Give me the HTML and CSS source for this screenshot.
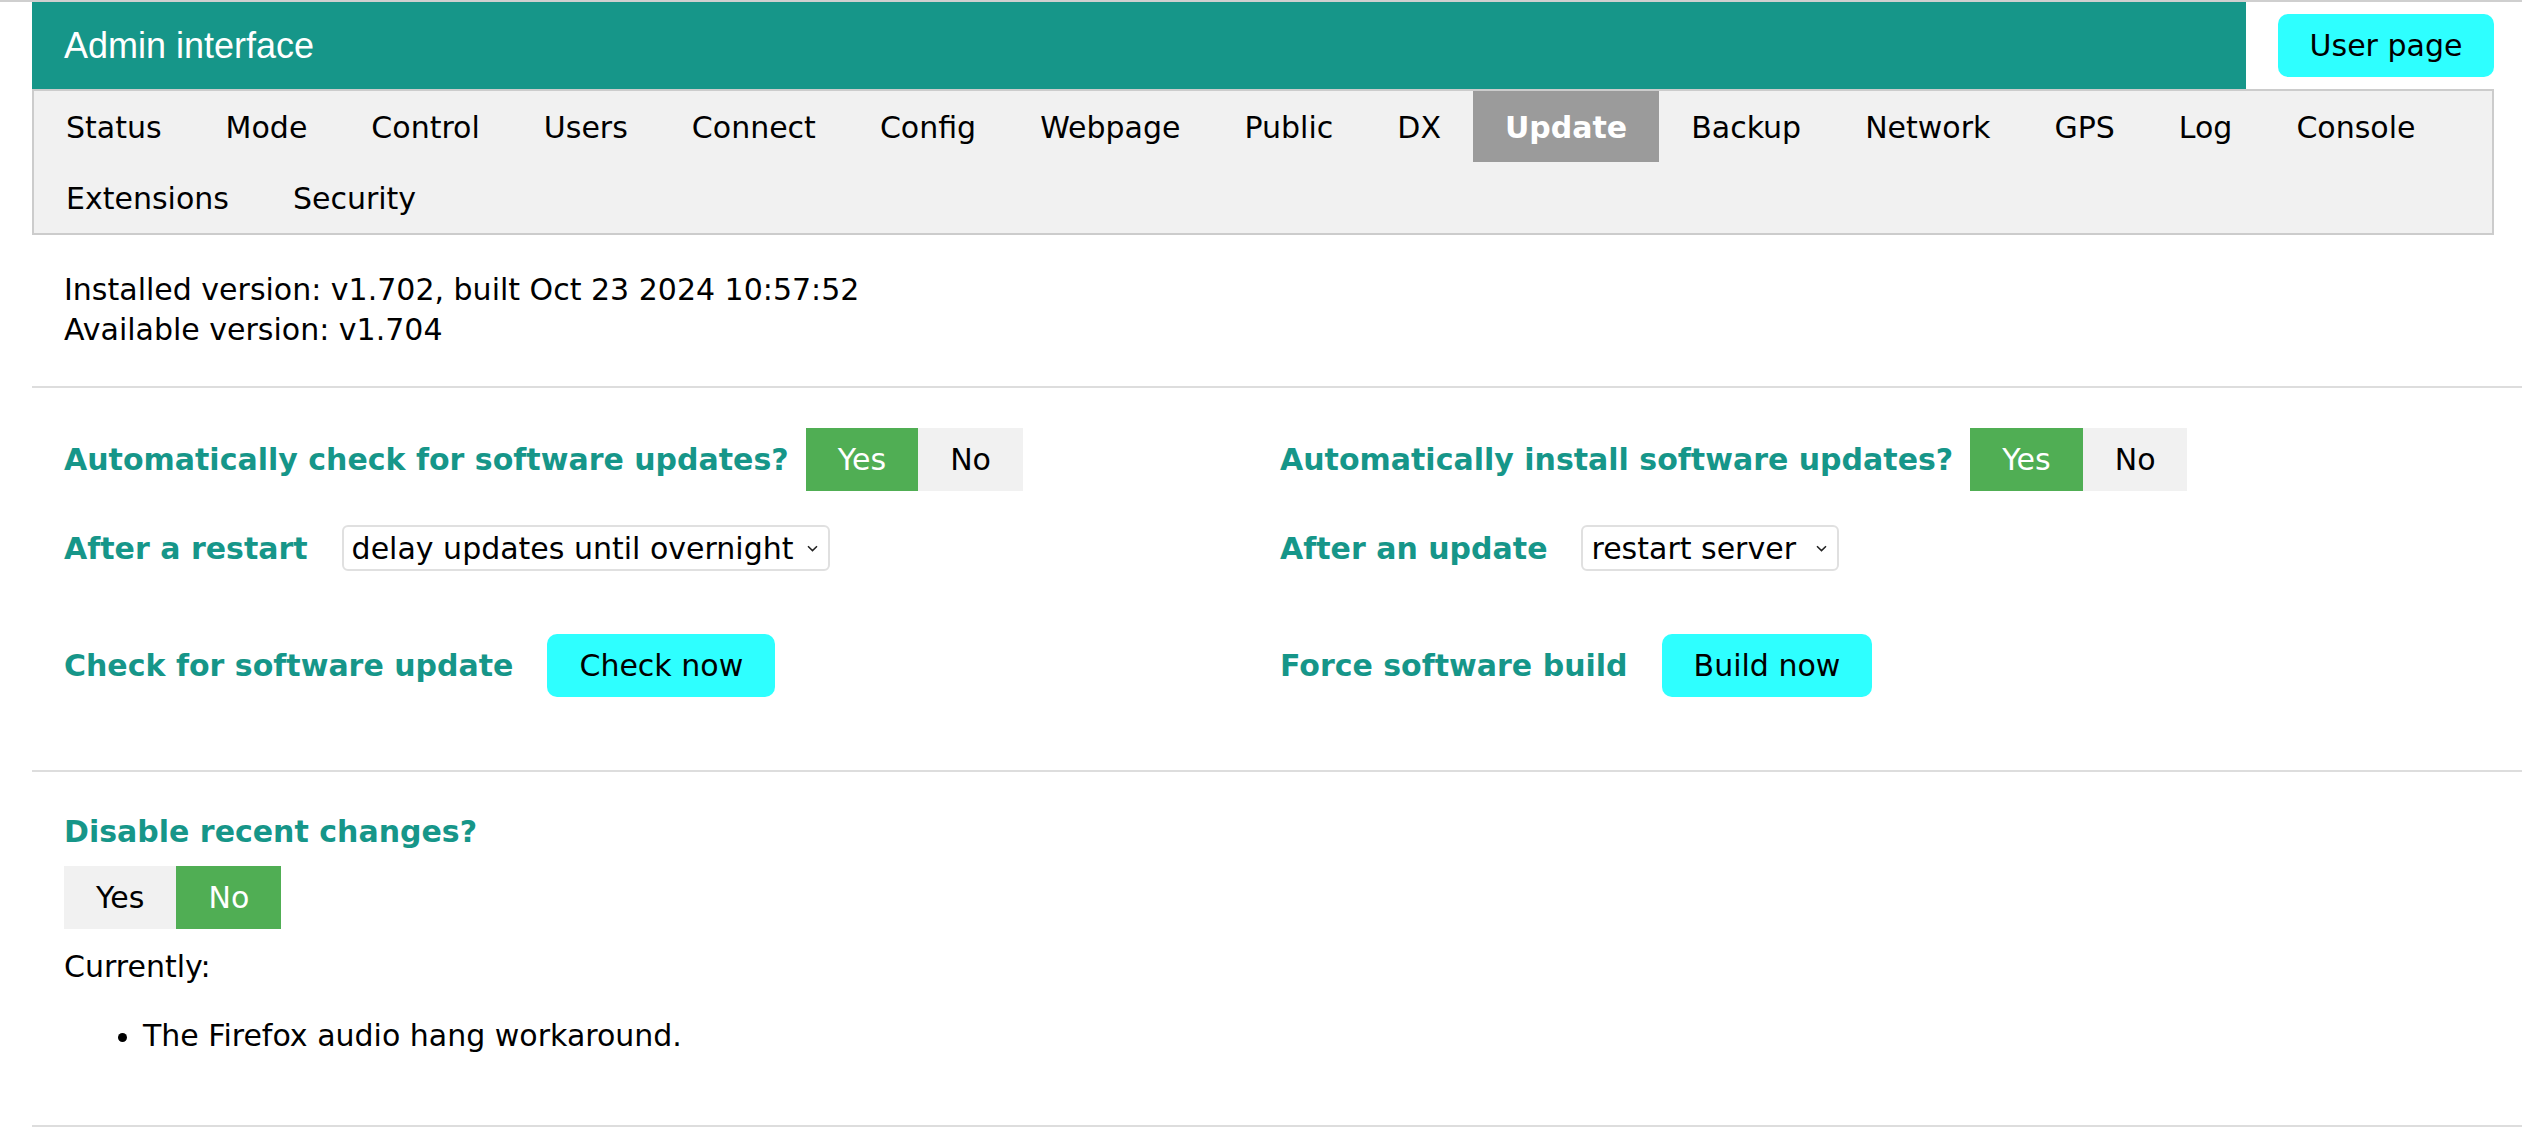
FILE: index.html
```html
<!DOCTYPE html>
<html lang="en">
<head>
<meta charset="utf-8">
<title>Admin interface</title>
<link rel="stylesheet" href="styles.css">
</head>
<body>
<header class="top">
  <div class="title">Admin interface</div>
  <button class="userbtn">User page</button>
</header>
<nav class="tabs">
  <a class="tab">Status</a>
  <a class="tab">Mode</a>
  <a class="tab">Control</a>
  <a class="tab">Users</a>
  <a class="tab">Connect</a>
  <a class="tab">Config</a>
  <a class="tab">Webpage</a>
  <a class="tab">Public</a>
  <a class="tab">DX</a>
  <a class="tab active">Update</a>
  <a class="tab">Backup</a>
  <a class="tab">Network</a>
  <a class="tab">GPS</a>
  <a class="tab">Log</a>
  <a class="tab">Console</a>
  <a class="tab">Extensions</a>
  <a class="tab">Security</a>
</nav>

<section class="info">
  <div>Installed version: v1.702, built Oct 23 2024 10:57:52</div>
  <div>Available version: v1.704</div>
</section>
<hr class="rule">

<section class="settings">
  <div class="col">
    <div class="row">
      <span class="label tight">Automatically check for software updates?</span>
      <span class="toggle"><span class="opt on">Yes</span><span class="opt">No</span></span>
    </div>
    <div class="row row2">
      <span class="label">After a restart</span>
      <span class="selwrap">
        <select class="sel sel-wide"><option>delay updates until overnight</option></select>
        <svg class="chev" width="11" height="7" viewBox="0 0 11 7"><path d="M1 1.2 L5.5 5.6 L10 1.2" fill="none" stroke="#222" stroke-width="1.5"/></svg>
      </span>
    </div>
    <div class="row row3">
      <span class="label">Check for software update</span>
      <button class="aqua">Check now</button>
    </div>
  </div>
  <div class="col">
    <div class="row">
      <span class="label tight">Automatically install software updates?</span>
      <span class="toggle"><span class="opt on">Yes</span><span class="opt">No</span></span>
    </div>
    <div class="row row2">
      <span class="label">After an update</span>
      <span class="selwrap">
        <select class="sel sel-narrow"><option>restart server</option></select>
        <svg class="chev" width="11" height="7" viewBox="0 0 11 7"><path d="M1 1.2 L5.5 5.6 L10 1.2" fill="none" stroke="#222" stroke-width="1.5"/></svg>
      </span>
    </div>
    <div class="row row3">
      <span class="label">Force software build</span>
      <button class="aqua">Build now</button>
    </div>
  </div>
</section>
<hr class="rule">

<section class="recent">
  <div class="label line">Disable recent changes?</div>
  <div class="toggle block"><span class="opt">Yes</span><span class="opt on">No</span></div>
  <div class="line current">Currently:</div>
  <ul class="list">
    <li>The Firefox audio hang workaround.</li>
  </ul>
</section>
<hr class="rule">
</body>
</html>
```

FILE: styles.css
```css
html, body {
  margin: 0;
  padding: 0;
  background: #ffffff;
}
body {
  border-top: 2px solid #cfcfcf;
  font-family: "DejaVu Sans", Verdana, sans-serif;
  font-size: 30px;
  color: #000;
}

/* header */
.top {
  display: flex;
  align-items: flex-start;
  margin-left: 32px;
  height: 87px;
}
.title {
  flex: 0 0 2214px;
  box-sizing: border-box;
  height: 87px;
  background: #169689;
  color: #ffffff;
  font-family: "Liberation Sans", Arial, sans-serif;
  font-size: 36px;
  padding-left: 32px;
  display: flex;
  align-items: center;
}
.userbtn {
  margin-left: 32px;
  margin-top: 12px;
  width: 216px;
  height: 63px;
  border: none;
  border-radius: 10px;
  background: #2effff;
  font-family: "DejaVu Sans", Verdana, sans-serif;
  font-size: 30px;
  color: #000;
  padding: 0;
}

/* tabs */
.tabs {
  margin-left: 32px;
  width: 2462px;
  box-sizing: border-box;
  border: 2px solid #cccccc;
  background: #f1f1f1;
  display: flex;
  flex-wrap: wrap;
}
.tab {
  display: block;
  height: 71px;
  line-height: 73px;
  padding: 0 32px;
  color: #000;
  white-space: nowrap;
  overflow: hidden;
}
.tab.active {
  background: #9b9b9b;
  color: #ffffff;
  font-weight: bold;
}

/* info */
.info {
  margin-top: 35px;
  padding-left: 64px;
  line-height: 40px;
}
.rule {
  margin: 36px 0 0 32px;
  border: none;
  border-top: 2px solid #dddddd;
  height: 0;
}

/* settings */
.settings {
  display: grid;
  grid-template-columns: 1216px 1fr;
  padding-left: 64px;
  padding-top: 40px;
  padding-bottom: 73px;
}
.settings + .rule { margin-top: 0; }
.col {
  display: flex;
  flex-direction: column;
}
.row {
  display: flex;
  align-items: center;
  height: 63px;
}
.row2 { margin-top: 34px; height: 46px; }
.row3 { margin-top: 63px; height: 63px; }

.label {
  color: #169689;
  font-weight: bold;
  margin-right: 34px;
  white-space: nowrap;
}
.label.tight { margin-right: 17px; }

.toggle {
  display: flex;
  height: 63px;
}
.toggle.block { width: max-content; }
.opt {
  display: flex;
  align-items: center;
  padding: 0 32px;
  background: #f1f1f1;
  color: #000;
}
.opt.on {
  background: #50ae54;
  color: #ffffff;
}

.selwrap {
  position: relative;
  display: inline-block;
  height: 46px;
}
.sel {
  appearance: none;
  -webkit-appearance: none;
  box-sizing: border-box;
  height: 46px;
  border: 2px solid #e0e0e0;
  border-radius: 6px;
  background: #ffffff;
  font-family: "DejaVu Sans", Verdana, sans-serif;
  font-size: 30px;
  color: #000;
  padding: 0 30px 0 8px;
  margin: 0;
}
.sel-wide { width: 488px; }
.sel-narrow { width: 258px; }
.chev {
  position: absolute;
  right: 12px;
  top: 20px;
}

.aqua {
  height: 63px;
  padding: 0 32px;
  border: none;
  border-radius: 10px;
  background: #2effff;
  font-family: "DejaVu Sans", Verdana, sans-serif;
  font-size: 30px;
  color: #000;
}

/* recent changes */
.recent {
  padding-left: 64px;
  padding-top: 40px;
  padding-bottom: 69px;
}
.recent + .rule { margin-top: 0; }
.line {
  line-height: 40px;
}
.recent .label { margin-right: 0; }
.toggle.block { margin-top: 14px; }
.current { margin-top: 18px; }
.list {
  margin: 29px 0 0 0;
  padding-left: 79px;
  line-height: 40px;
}
```
